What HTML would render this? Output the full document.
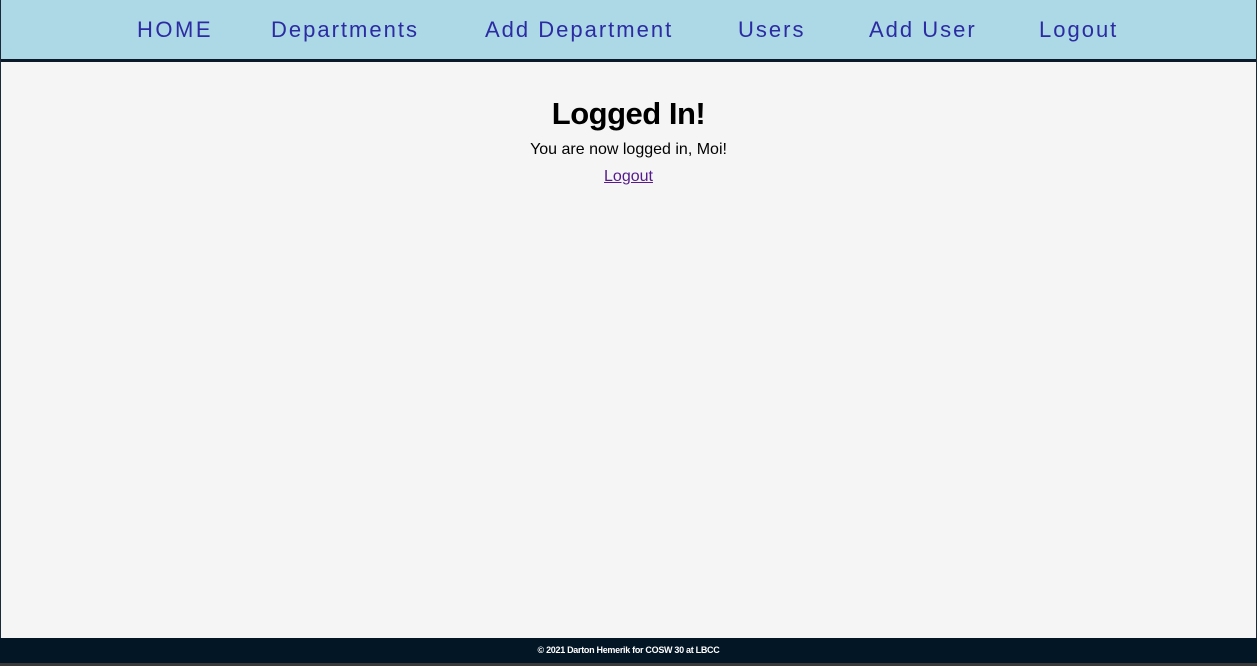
<!DOCTYPE html>
<html><head><meta charset="utf-8"><style>
html,body{margin:0;padding:0;width:1257px;height:666px;overflow:hidden;background:#1a2a38;font-family:"Liberation Sans",sans-serif}
.wrap{position:absolute;left:1px;top:0;width:1255px;height:638px;background:#f5f5f5}
.nav{position:absolute;left:0;top:0;width:1255px;height:59px;background:#add8e6;border-bottom:3px solid #0d1a2a}
.nav a{position:absolute;top:17px;font-size:22px;letter-spacing:2px;color:#2b2ba3;text-decoration:none;white-space:nowrap}
h1{position:absolute;left:0;width:1255px;top:96px;margin:0;text-align:center;font-size:31px;font-weight:bold;color:#000;letter-spacing:-0.5px}
.p{position:absolute;left:0;width:1255px;top:141px;text-align:center;font-size:16px;color:#000}
.l{position:absolute;left:0;width:1255px;top:168px;text-align:center;font-size:16px}
.l a{color:#551a8b}
.foot{position:absolute;left:0;top:638px;width:1257px;height:25px;background:#031626;color:#fff;font-size:9px;font-weight:bold;text-align:center;line-height:25px;letter-spacing:-0.3px}
.strip{position:absolute;left:0;top:663px;width:1257px;height:3px;background:#3a3a3a}
</style></head><body>
<div class="wrap">
<div class="nav">
<a style="left:136px;letter-spacing:2.5px">HOME</a>
<a style="left:270px">Departments</a>
<a style="left:484px">Add Department</a>
<a style="left:737px">Users</a>
<a style="left:868px">Add User</a>
<a style="left:1038px">Logout</a>
</div>
<h1>Logged In!</h1>
<div class="p">You are now logged in, Moi!</div>
<div class="l"><a href="#">Logout</a></div>
</div>
<div class="foot">© 2021 Darton Hemerik for COSW 30 at LBCC</div>
<div class="strip"></div>
</body></html>
